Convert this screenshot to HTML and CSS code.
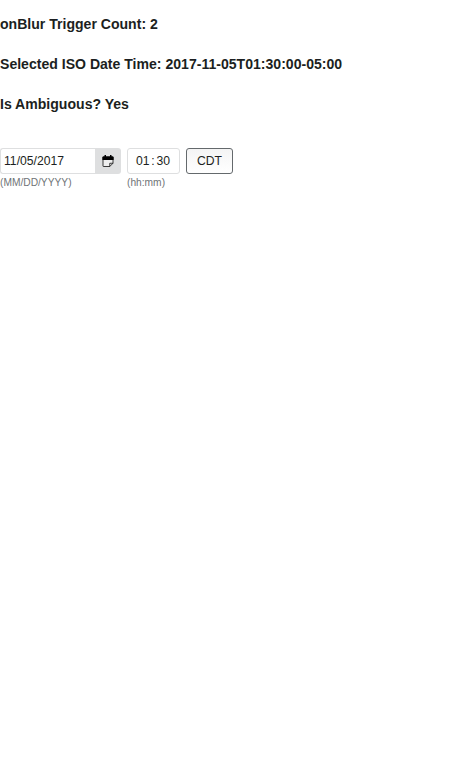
FILE: index.html
```html
<!DOCTYPE html>
<html lang="en">
<head>
<meta charset="utf-8">
<title>Date Time Input</title>
<link rel="stylesheet" href="styles.css">
</head>
<body>
<h3 class="status">onBlur Trigger Count: 2</h3>
<h3 class="status">Selected ISO Date Time: 2017-11-05T01:30:00-05:00</h3>
<h3 class="status">Is Ambiguous? Yes</h3>
<div class="date-time">
  <div class="field date-field">
    <div class="date-control">
      <span class="date-input">11/05/2017</span>
      <button class="calendar-button" aria-label="Calendar">
        <svg class="calendar-icon" viewBox="0 0 48 48"><path d="M42 5h-4V0h-6v5H16V0h-6v5H6a4 4 0 0 0-4 4v10h44V9a4 4 0 0 0-4-4z"/><path d="M4 18v26a2 2 0 0 0 2 2h25l13-13V18z" fill="#eee" stroke="#000" stroke-width="3"/><path d="M2 8h44v12H2z"/><path d="M31 46V33h13" fill="none" stroke="#000" stroke-width="3"/></svg>
      </button>
    </div>
    <div class="format">(MM/DD/YYYY)</div>
  </div>
  <div class="field time-field">
    <div class="time-control"><span>01</span><span class="colon">:</span><span>30</span></div>
    <div class="format">(hh:mm)</div>
  </div>
  <button class="zone-button">CDT</button>
</div>
</body>
</html>
```
FILE: styles.css
```css
* { box-sizing: border-box; }
body { margin: 0; padding-top: 14px; font-family: "Liberation Sans", Arial, sans-serif; color: #1c1f21; background: #fff; }
.status { margin: 0 0 20px; font-size: 14.07px; line-height: 20px; font-weight: bold; }
.date-time { display: flex; align-items: flex-start; gap: 6px; margin-top: 34px; font-size: 12.18px; }
.date-control { display: flex; width: 121px; height: 26px; }
.date-input { flex: 1; padding-left: 3px; line-height: 24px; border: 1px solid #dedfe0; border-right: 0; border-radius: 3px 0 0 3px; }
.calendar-button { display: flex; align-items: center; justify-content: center; width: 26px; padding: 0; border: 0; border-radius: 0 3px 3px 0; background: #dedfe0; }
.calendar-icon { width: 12px; height: 12px; }
.time-control { display: flex; justify-content: center; width: 53px; height: 26px; padding-right: 1px; line-height: 24px; border: 1px solid #dedfe0; border-radius: 3px; }
.colon { width: 7px; text-align: center; }
.format { margin-top: 2px; font-size: 10.22px; line-height: 14px; color: #6f7477; }
.zone-button { width: 47px; height: 26px; padding: 0; font: 12.18px "Liberation Sans", Arial, sans-serif; color: #1c1f21; background: linear-gradient(#f4f4f4, #fff); border: 1px solid #64696c; border-radius: 3px; }
```
